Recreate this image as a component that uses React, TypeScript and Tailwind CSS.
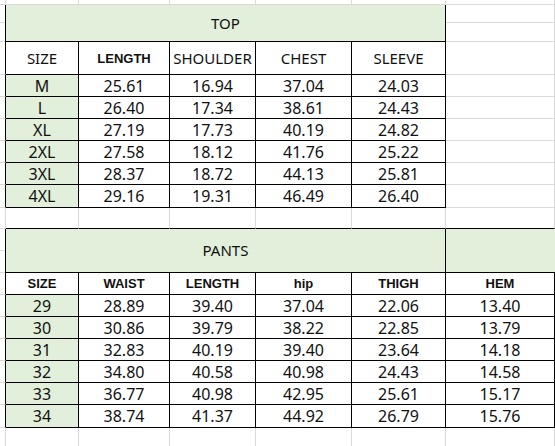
import type { ReactNode } from "react";

const W = ["w-[6px]", "w-[73px]", "w-[91px]", "w-[86px]", "w-[96px]", "w-[94px]", "flex-1"];

type Def = { t?: string; r?: boolean; b?: boolean; g?: boolean; bold?: boolean; big?: boolean };

const Cell = ({ col, d }: { col: number; d: Def }) => (
  <div
    className={`${W[col]} h-full shrink-0 flex items-center justify-center border-r border-b leading-none whitespace-nowrap overflow-hidden ${
      d.r ? "border-r-black" : "border-r-[#dadada]"
    } ${d.b ? "border-b-black" : "border-b-[#dadada]"} ${d.g ? "bg-[#e2efda]" : "bg-white"} ${
      d.bold
        ? "font-['Liberation_Sans',Arial,sans-serif] font-bold text-[13px] text-[#111]"
        : d.big
          ? "font-['Noto_Sans',sans-serif] text-[16px] text-[#111]"
          : "font-['Noto_Sans',sans-serif] text-[15px] text-[#111]"
    }`}
  >
    {d.t}
  </div>
);

const Row = ({ h, cells }: { h: string; cells: Def[] }) => (
  <div className={`flex ${h}`}>
    {cells.map((d, i) => (
      <Cell key={i} col={i} d={d} />
    ))}
  </div>
);

const Split = ({ w, right, top }: { w: string; right?: boolean; top: string }) => (
  <div className={`${w} h-full shrink-0 flex flex-col border-r ${right ? "border-r-black" : "border-r-[#dadada]"}`}>
    <div className={`${top} border-b border-b-[#dadada]`} />
    <div className="flex-1 border-b border-b-[#dadada]" />
  </div>
);

const Title = ({ h, top, children, greenRight }: { h: string; top: string; children: ReactNode; greenRight?: boolean }) => (
  <div className={`flex ${h}`}>
    <Split w="w-[6px]" right top={top} />
    <div className="w-[440px] h-full shrink-0 flex items-center justify-center bg-[#e2efda] border-r border-b border-black font-['Noto_Sans',sans-serif] text-[15px] leading-none text-[#111]">
      {children}
    </div>
    {greenRight ? (
      <div className="flex-1 h-full bg-[#e2efda] border-b border-b-black" />
    ) : (
      <Split w="flex-1" top={top} />
    )}
  </div>
);

const top = [
  ["M", "25.61", "16.94", "37.04", "24.03"],
  ["L", "26.40", "17.34", "38.61", "24.43"],
  ["XL", "27.19", "17.73", "40.19", "24.82"],
  ["2XL", "27.58", "18.12", "41.76", "25.22"],
  ["3XL", "28.37", "18.72", "44.13", "25.81"],
  ["4XL", "29.16", "19.31", "46.49", "26.40"],
];

const pants = [
  ["29", "28.89", "39.40", "37.04", "22.06", "13.40"],
  ["30", "30.86", "39.79", "38.22", "22.85", "13.79"],
  ["31", "32.83", "40.19", "39.40", "23.64", "14.18"],
  ["32", "34.80", "40.58", "40.98", "24.43", "14.58"],
  ["33", "36.77", "40.98", "42.95", "25.61", "15.17"],
  ["34", "38.74", "41.37", "44.92", "26.79", "15.76"],
];

const blank = (n: number): Def[] => Array.from({ length: n }, () => ({}));

export default function App() {
  return (
    <div className="w-[555px] h-[446px] overflow-hidden bg-white">
      <Row h="h-[5px]" cells={blank(7)} />
      <Title h="h-[37px]" top="h-[18px]">
        TOP
      </Title>
      <Row
        h="h-[33px]"
        cells={[
          { r: true },
          { t: "SIZE", r: true, b: true },
          { t: "LENGTH", r: true, b: true, bold: true },
          { t: "SHOULDER", r: true, b: true },
          { t: "CHEST", r: true, b: true },
          { t: "SLEEVE", r: true, b: true },
          {},
        ]}
      />
      {top.map((row, i) => (
        <Row
          key={row[0]}
          h={i === top.length - 1 ? "h-[23px]" : "h-[22px]"}
          cells={[
            { r: true },
            ...row.map((t, j) => ({ t, r: true, b: true, g: j === 0, big: true })),
            {},
          ]}
        />
      ))}
      <Row h="h-[21px]" cells={[{}, { b: true }, { b: true }, { b: true }, { b: true }, { b: true }, { b: true }]} />
      <Title h="h-[44px]" top="h-[22px]" greenRight>
        PANTS
      </Title>
      <Row
        h="h-[22px]"
        cells={[
          { r: true },
          ...["SIZE", "WAIST", "LENGTH", "hip", "THIGH", "HEM"].map((t) => ({ t, r: true, b: true, bold: true })),
        ]}
      />
      {pants.map((row, i) => (
        <Row
          key={row[0]}
          h={i === pants.length - 1 ? "h-[23px]" : "h-[22px]"}
          cells={[{ r: true }, ...row.map((t, j) => ({ t, r: true, b: true, g: j === 0, big: true }))]}
        />
      ))}
      <Row h="h-[22px]" cells={blank(7)} />
    </div>
  );
}
